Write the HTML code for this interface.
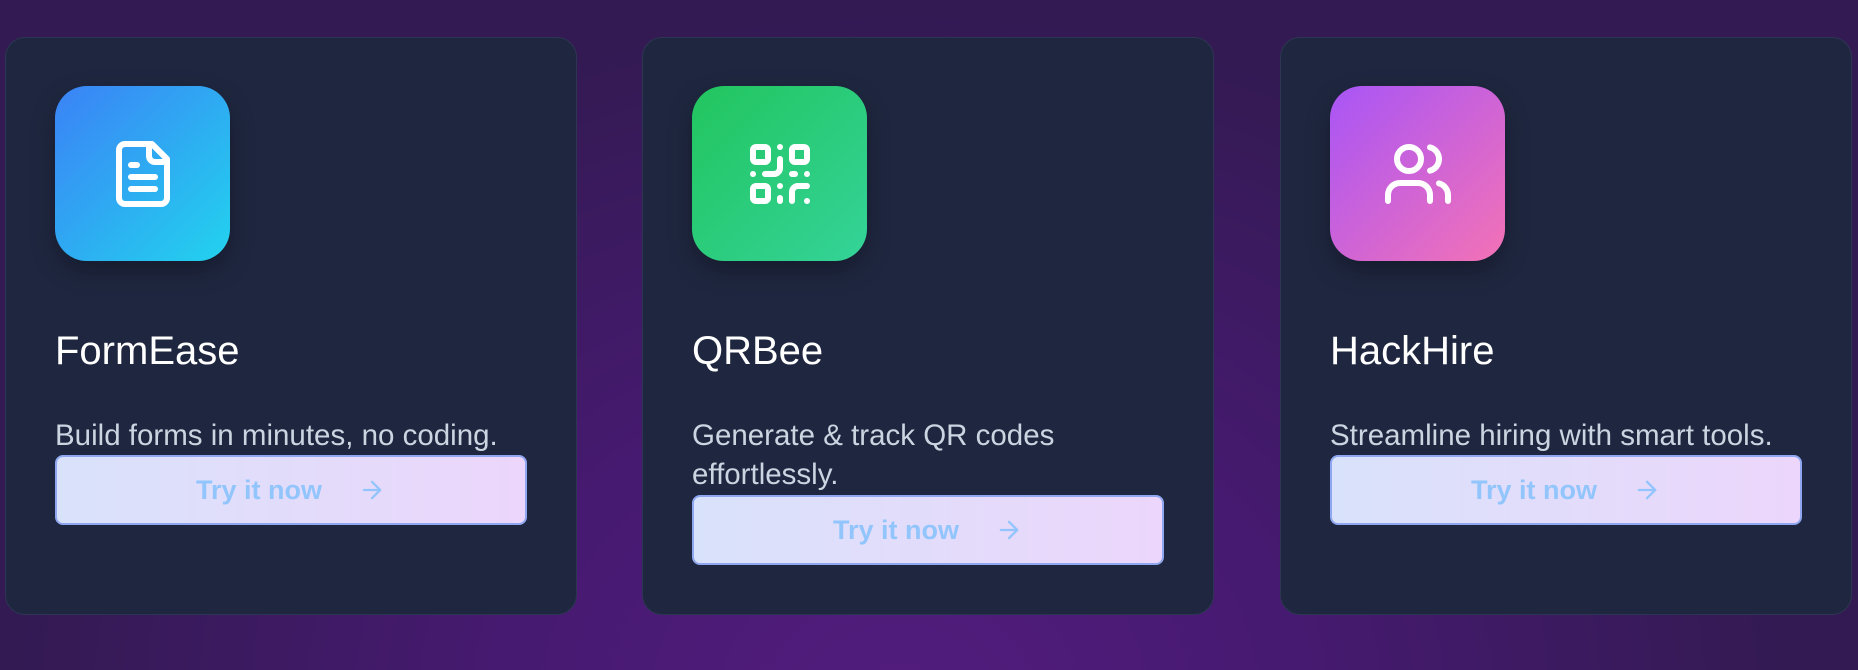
<!DOCTYPE html>
<html><head><meta charset="utf-8"><style>
html,body{margin:0;padding:0}
body{width:1858px;height:670px;overflow:hidden;position:relative;font-family:"Liberation Sans",sans-serif;
background:radial-gradient(ellipse 900px 700px at 900px 700px,#521c7e 0%,#461a70 45%,#331a52 100%);}
.card{position:absolute;top:37px;width:572px;height:578px;background:#1f2740;border:1px solid #2c3552;border-radius:20px;box-sizing:border-box}
.ic{position:absolute;left:49px;top:48px;width:175px;height:175px;border-radius:32px;display:flex;align-items:center;justify-content:center;box-shadow:0 10px 25px rgba(0,0,0,.3)}
.ic svg{width:72px;height:72px}
h2{position:absolute;left:49px;top:290px;margin:0;font-weight:400;font-size:40px;color:#fff;line-height:46px}
p{position:absolute;left:49px;top:378px;margin:0;font-size:29.5px;line-height:39px;color:#cbd5e1;width:470px}
.btn{position:absolute;left:49px;width:472px;height:70px;box-sizing:border-box;border:2px solid #8ea7f0;border-radius:8px;
background:linear-gradient(90deg,#d9e2fb,#ecd6fb);display:flex;align-items:center;justify-content:center;color:#93c5fd;font-weight:700;font-size:27px}
.btn svg{margin-left:36px;width:28px;height:28px}
</style></head><body>
<div class="card" style="left:5px">
<div class="ic" style="background:linear-gradient(135deg,#3b82f6,#22d3ee)"><svg viewBox="0 0 24 24" fill="none" stroke="#fff" stroke-width="2" stroke-linecap="round" stroke-linejoin="round"><path d="M15 2H6a2 2 0 0 0-2 2v16a2 2 0 0 0 2 2h12a2 2 0 0 0 2-2V7Z"/><path d="M14 2v4a2 2 0 0 0 2 2h4"/><path d="M10 9H8"/><path d="M16 13H8"/><path d="M16 17H8"/></svg></div>
<h2>FormEase</h2>
<p>Build forms in minutes, no coding.</p>
<div class="btn" style="top:417px">Try it now<svg viewBox="0 0 24 24" fill="none" stroke="#93c5fd" stroke-width="2" stroke-linecap="round" stroke-linejoin="round"><path d="M5 12h14"/><path d="m12 5 7 7-7 7"/></svg></div>
</div>
<div class="card" style="left:642px">
<div class="ic" style="background:linear-gradient(135deg,#22c55e,#34d399)"><svg viewBox="0 0 24 24" fill="none" stroke="#fff" stroke-width="2" stroke-linecap="round" stroke-linejoin="round"><rect x="3" y="3" width="5" height="5" rx="1"/><rect x="16" y="3" width="5" height="5" rx="1"/><rect x="3" y="16" width="5" height="5" rx="1"/><path d="M21 16h-3a2 2 0 0 0-2 2v3"/><path d="M21 21v.01"/><path d="M12 7v3a2 2 0 0 1-2 2H7"/><path d="M3 12h.01"/><path d="M12 3h.01"/><path d="M12 16v.01"/><path d="M16 12h1"/><path d="M21 12v.01"/><path d="M12 21v-1"/></svg></div>
<h2>QRBee</h2>
<p>Generate &amp; track QR codes effortlessly.</p>
<div class="btn" style="top:457px">Try it now<svg viewBox="0 0 24 24" fill="none" stroke="#93c5fd" stroke-width="2" stroke-linecap="round" stroke-linejoin="round"><path d="M5 12h14"/><path d="m12 5 7 7-7 7"/></svg></div>
</div>
<div class="card" style="left:1280px">
<div class="ic" style="background:linear-gradient(135deg,#a855f7,#f472b6)"><svg viewBox="0 0 24 24" fill="none" stroke="#fff" stroke-width="2" stroke-linecap="round" stroke-linejoin="round"><path d="M16 21v-2a4 4 0 0 0-4-4H6a4 4 0 0 0-4 4v2"/><circle cx="9" cy="7" r="4"/><path d="M22 21v-2a4 4 0 0 0-3-3.87"/><path d="M16 3.13a4 4 0 0 1 0 7.75"/></svg></div>
<h2>HackHire</h2>
<p>Streamline hiring with smart tools.</p>
<div class="btn" style="top:417px">Try it now<svg viewBox="0 0 24 24" fill="none" stroke="#93c5fd" stroke-width="2" stroke-linecap="round" stroke-linejoin="round"><path d="M5 12h14"/><path d="m12 5 7 7-7 7"/></svg></div>
</div>
</body></html>
